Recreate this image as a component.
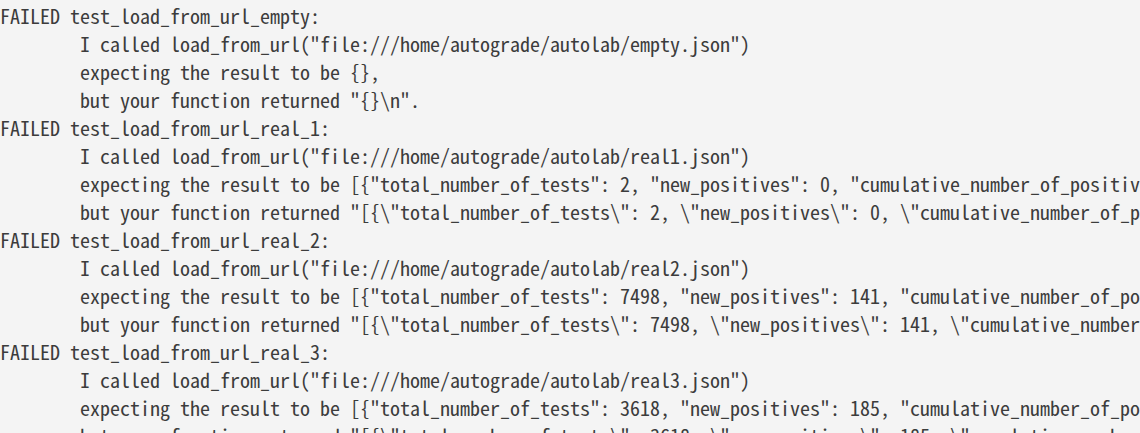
import React from 'react'

type Line = { text: string; indent?: boolean }

const lines: Line[] = [
    { text: 'FAILED test_load_from_url_empty:' },
    { text: 'I called load_from_url("file:///home/autograde/autolab/empty.json")', indent: true },
    { text: 'expecting the result to be {},', indent: true },
    { text: 'but your function returned "{}\\n".', indent: true },
    { text: 'FAILED test_load_from_url_real_1:' },
    { text: 'I called load_from_url("file:///home/autograde/autolab/real1.json")', indent: true },
    {
        text: 'expecting the result to be [{"total_number_of_tests": 2, "new_positives": 0, "cumulative_number_of_positives": 0, "date": "2020-03-01"}]',
        indent: true,
    },
    {
        text: 'but your function returned "[{\\"total_number_of_tests\\": 2, \\"new_positives\\": 0, \\"cumulative_number_of_positives\\": 0}]"',
        indent: true,
    },
    { text: 'FAILED test_load_from_url_real_2:' },
    { text: 'I called load_from_url("file:///home/autograde/autolab/real2.json")', indent: true },
    {
        text: 'expecting the result to be [{"total_number_of_tests": 7498, "new_positives": 141, "cumulative_number_of_positives": 141}]',
        indent: true,
    },
    {
        text: 'but your function returned "[{\\"total_number_of_tests\\": 7498, \\"new_positives\\": 141, \\"cumulative_number_of_positives\\": 141}]"',
        indent: true,
    },
    { text: 'FAILED test_load_from_url_real_3:' },
    { text: 'I called load_from_url("file:///home/autograde/autolab/real3.json")', indent: true },
    {
        text: 'expecting the result to be [{"total_number_of_tests": 3618, "new_positives": 185, "cumulative_number_of_positives": 185}]',
        indent: true,
    },
    {
        text: 'but your function returned "[{\\"total_number_of_tests\\": 3618, \\"new_positives\\": 185, \\"cumulative_number_of_positives\\": 185}]"',
        indent: true,
    },
]

export default function App() {
    return (
        <div className="w-[1140px] h-[433px] overflow-hidden bg-[#f4f4f4] pt-[2px]">
            <div className="font-['Noto_Sans_Mono_CJK_SC','Liberation_Mono',monospace] text-[20px] leading-[28px] text-[#3c3c3c]">
                {lines.map((line, i) => (
                    <div key={i} className={line.indent ? 'whitespace-pre pl-[80px]' : 'whitespace-pre'}>
                        {line.text}
                    </div>
                ))}
            </div>
        </div>
    )
}
